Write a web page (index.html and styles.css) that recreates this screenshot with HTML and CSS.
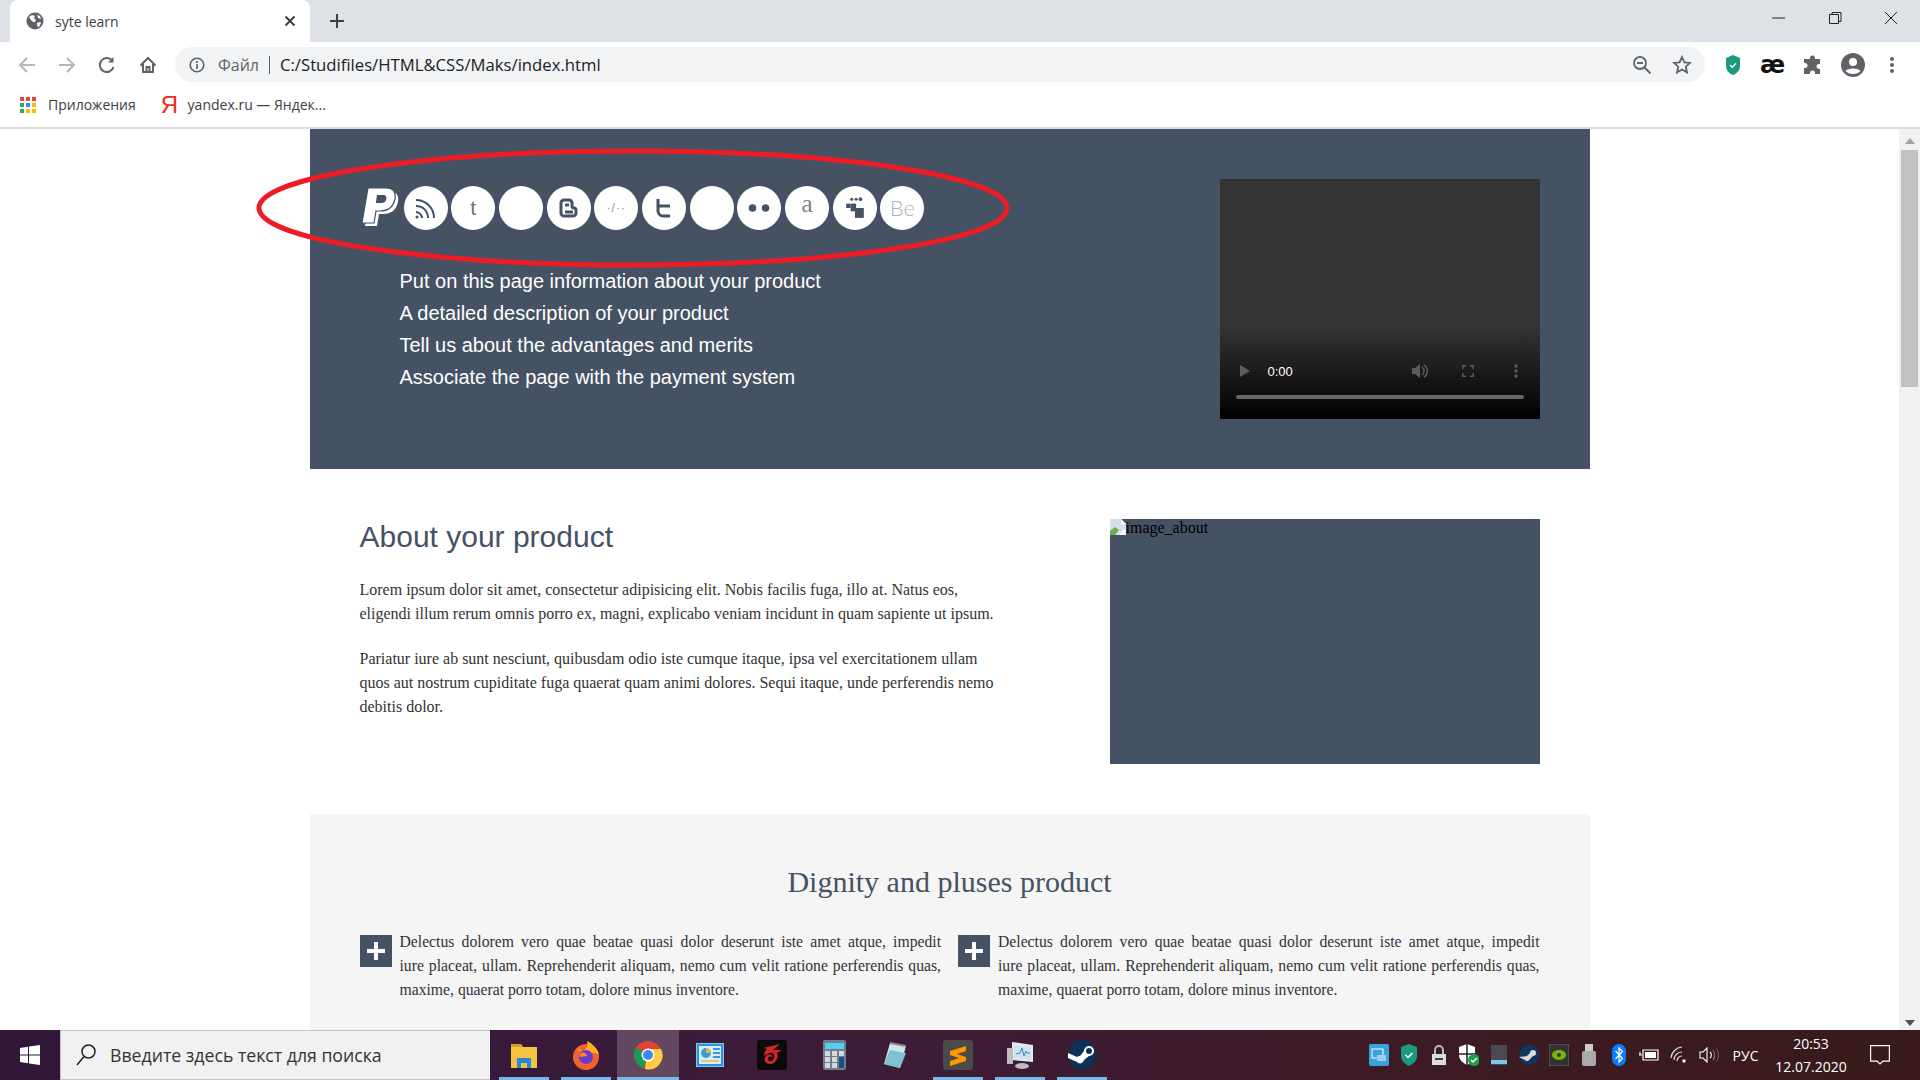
FILE: index.html
```html
<!DOCTYPE html>
<html>
<head>
<meta charset="utf-8">
	<title>syte learn</title>
	<link rel="stylesheet" href="styles.css">
</head>
<body>
	<div class="tabstrip">
		<div class="tab">
			<svg class="globe" width="18" height="18" viewBox="0 0 18 18"><circle cx="9" cy="9" r="8.5" fill="#5f6368"/><path d="M3 5l3-2 3 1-1 2 2 2-1 2H7L5 8zM11 11l3-1 1 1-2 4-2-1zM11 3l3 1 1 3-3-1z" fill="#fff"/></svg>
			<span class="tab-title">syte learn</span>
			<svg class="tab-close" width="12" height="12" viewBox="0 0 12 12"><path d="M1.5 1.5l9 9M10.5 1.5l-9 9" stroke="#3c4043" stroke-width="2"/></svg>
		</div>
		<svg class="new-tab" width="16" height="16" viewBox="0 0 16 16"><path d="M8 1v14M1 8h14" stroke="#3c4043" stroke-width="2"/></svg>
		<div class="win-btns">
			<svg width="16" height="16" viewBox="0 0 16 16"><path d="M1 8h13" stroke="#222" stroke-width="1"/></svg>
			<svg width="16" height="16" viewBox="0 0 16 16" fill="none" stroke="#222"><path d="M2.500 4.500h9v9h-9zM5 4.500V2.500h9v9h-2.500"/></svg>
			<svg width="16" height="16" viewBox="0 0 16 16"><path d="M2 2l12 12M14 2L2 14" stroke="#222" stroke-width="1"/></svg>
		</div>
	</div>

	<div class="toolbar">
		<div class="nav-btns">
			<svg width="18" height="18" viewBox="0 0 18 18" fill="none" stroke="#b4b7bb" stroke-width="2"><path d="M17 9H2M9 2L2 9l7 7"/></svg>
			<svg width="18" height="18" viewBox="0 0 18 18" fill="none" stroke="#b4b7bb" stroke-width="2"><path d="M1 9h15M9 2l7 7-7 7"/></svg>
			<svg width="18" height="18" viewBox="0 0 18 18" fill="none" stroke="#5f6368" stroke-width="2"><path d="M15.500 11a7 7 0 1 1-1-6"/><path d="M15.500 1v5.500H10" fill="#5f6368" stroke="none"/></svg>
			<svg width="18" height="18" viewBox="0 0 18 18" fill="none" stroke="#5f6368" stroke-width="2"><path d="M1.500 9.500L9 2l7.500 7.500M4 8v8h10V8M7.500 16v-5h3v5"/></svg>
		</div>
		<div class="omnibox">
			<svg width="16" height="16" viewBox="0 0 16 16" fill="none" stroke="#5f6368" stroke-width="1.600"><circle cx="8" cy="8" r="6.800"/><path d="M8 7v5M8 4v2"/></svg>
			<span class="scheme">Файл</span>
			<span class="omni-sep"></span>
			<span class="url">C:/Studifiles/HTML&amp;CSS/Maks/index.html</span>
			<svg class="omni-zoom" width="20" height="20" viewBox="0 0 20 20" fill="none" stroke="#5f6368" stroke-width="1.800"><circle cx="8" cy="8" r="6"/><path d="M5 8h6M12.500 12.500l6 6"/></svg>
			<svg class="omni-star" width="20" height="20" viewBox="0 0 20 20" fill="none" stroke="#5f6368" stroke-width="1.800"><path d="M10 2l2.400 5.300 5.600.6-4.200 3.800 1.200 5.700L10 14.500 5 17.400l1.200-5.700L2 7.900l5.600-.6z"/></svg>
		</div>
		<div class="ext-btns">
			<svg width="16" height="22" viewBox="0 0 16 22"><path d="M8 1l7 3v8c0 5-4 8-7 9-3-1-7-4-7-9V4z" fill="#1a9b7f"/><path d="M5 11l2.200 2.200L11 9.500" fill="none" stroke="#fff" stroke-width="1.400"/></svg>
			<span class="ae">æ</span>
			<svg width="20" height="20" viewBox="0 0 20 20"><path d="M7 3a2.500 2.500 0 0 1 5 0v1h5v5h-1a2.500 2.500 0 0 0 0 5h1v5h-5v-1a2.500 2.500 0 0 0-5 0v1H1v-6h1a2.500 2.500 0 0 0 0-5H1V4h6z" fill="#5f6368"/></svg>
			<svg width="24" height="24" viewBox="0 0 24 24"><circle cx="12" cy="12" r="12" fill="#5f6368"/><circle cx="12" cy="9" r="4" fill="#fff"/><path d="M4.500 18c2-3.500 13-3.500 15 0-3.500 4-11.500 4-15 0z" fill="#fff"/></svg>
			<svg width="6" height="18" viewBox="0 0 6 18" fill="#5f6368"><circle cx="3" cy="3" r="2"/><circle cx="3" cy="9" r="2"/><circle cx="3" cy="15" r="2"/></svg>
		</div>
	</div>

	<div class="bookmarks">
		<svg width="16" height="16" viewBox="0 0 16 16">
			<rect x="0" y="0" width="4" height="4" fill="#ea4335"/><rect x="6" y="0" width="4" height="4" fill="#ea4335"/><rect x="12" y="0" width="4" height="4" fill="#ea4335"/>
			<rect x="0" y="6" width="4" height="4" fill="#34a853"/><rect x="6" y="6" width="4" height="4" fill="#4285f4"/><rect x="12" y="6" width="4" height="4" fill="#fbbc05"/>
			<rect x="0" y="12" width="4" height="4" fill="#34a853"/><rect x="6" y="12" width="4" height="4" fill="#fbbc05"/><rect x="12" y="12" width="4" height="4" fill="#fbbc05"/>
		</svg>
		<span class="bm-text">Приложения</span>
		<span class="ya">Я</span>
		<span class="bm-text">yandex.ru — Яндек...</span>
	</div>

	<div class="viewport">
		<div class="page">
			<div class="hero">
				<div class="hero-left">
					<div class="socials">
						<svg class="paypal" width="42" height="42" viewBox="0 0 42 42"><path d="M8 1H26C34 1 36 6 35 12C33 21 27 24 20 24H16L14 36H2Z" fill="#fff" transform="translate(3 3)"/><path d="M8 1H26C34 1 36 6 35 12C33 21 27 24 20 24H16L14 36H2Z" fill="#fff" stroke="#455264" stroke-width="1.200"/><path d="M17 8H23C26 8 27 10 26 13C25 16 22 16 20 16H15.800Z" fill="#455264"/></svg>
						<span class="soc"><svg width="28" height="28" viewBox="0 0 28 28" fill="none" stroke="#455264" stroke-width="2"><path d="M4 6c10 0 18 8 18 18M4 12c7 0 12 5 12 12M4 18c3 0 6 3 6 6"/><circle cx="5" cy="23" r="1.500" fill="#455264" stroke="none"/></svg></span>
						<span class="soc soc-t">t</span>
						<span class="soc"></span>
						<span class="soc"><svg width="22" height="22" viewBox="0 0 22 22" fill="none" stroke="#455264" stroke-width="3"><path d="M3 6a3 3 0 0 1 3-3h5a3 3 0 0 1 3 3v3a2 2 0 0 0 2 2 2 2 0 0 1 2 2v3a3 3 0 0 1-3 3H6a3 3 0 0 1-3-3zM7 8h4M7 15h8" /></svg></span>
						<span class="soc soc-code">·/··</span>
						<span class="soc"><svg width="22" height="22" viewBox="0 0 22 22" fill="none" stroke="#455264" stroke-width="3"><path d="M5 2v12a5 5 0 0 0 5 5h7M5 9h12"/></svg></span>
						<span class="soc"></span>
						<span class="soc"><svg width="24" height="10" viewBox="0 0 24 10" fill="#455264"><circle cx="5.500" cy="5" r="3.800"/><circle cx="18.500" cy="5" r="3.800"/></svg></span>
						<span class="soc soc-a">a</span>
						<span class="soc"><svg width="22" height="22" viewBox="0 0 20 20" fill="#455264"><circle cx="7" cy="2" r="1.400"/><circle cx="11" cy="2" r="1.400"/><circle cx="15" cy="2" r="1.700"/><rect x="2" y="6" width="4" height="4"/><rect x="6" y="6" width="5" height="7"/><rect x="10" y="10" width="8" height="9"/></svg></span>
						<span class="soc soc-be">Be</span>
					</div>
					<ul class="hero-list">
						<li>Put on this page information about your product</li>
						<li>A detailed description of your product</li>
						<li>Tell us about the advantages and merits</li>
						<li>Associate the page with the payment system</li>
					</ul>
				</div>
				<div class="video">
					<div class="controls">
						<div class="controls-row">
							<svg width="10" height="12" viewBox="0 0 10 12"><path d="M0 0l10 6-10 6z" fill="#5c5c5c"/></svg>
							<span class="time">0:00</span>
							<svg class="vol" width="16" height="16" viewBox="0 0 16 16" fill="none" stroke="#5c5c5c" stroke-width="1.500"><path d="M0 5h3l5-4v14l-5-4H0z" fill="#5c5c5c" stroke="none"/><path d="M10 4a5 5 0 0 1 0 8M12 2a7 7 0 0 1 0 12"/></svg>
							<svg class="full" width="12" height="12" viewBox="0 0 12 12" fill="none" stroke="#5c5c5c" stroke-width="1.500"><path d="M.8 4V.8H4M8 .8h3.200V4M11.200 8v3.200H8M4 11.200H.8V8"/></svg>
							<svg class="more" width="4" height="14" viewBox="0 0 4 14" fill="#5c5c5c"><circle cx="2" cy="2" r="1.700"/><circle cx="2" cy="7" r="1.700"/><circle cx="2" cy="12" r="1.700"/></svg>
						</div>
						<div class="progress"></div>
					</div>
				</div>
			</div>

			<div class="about">
				<div class="about-text">
					<h2>About your product</h2>
					<p>Lorem ipsum dolor sit amet, consectetur adipisicing elit. Nobis facilis fuga, illo at. Natus eos, eligendi illum rerum omnis porro ex, magni, explicabo veniam incidunt in quam sapiente ut ipsum.</p>
					<p>Pariatur iure ab sunt nesciunt, quibusdam odio iste cumque itaque, ipsa vel exercitationem ullam quos aut nostrum cupiditate fuga quaerat quam animi dolores. Sequi itaque, unde perferendis nemo debitis dolor.</p>
				</div>
				<div class="about-img">
					<svg width="16" height="16" viewBox="0 0 16 16"><path d="M0 0h11l5 5v11H0z" fill="#d5dfeb"/><path d="M11 0l5 5h-5z" fill="#fff"/><path d="M0 16v-4l5-4 4 3-4 5z" fill="#6fae4e"/><path d="M9 16l5-6 2 2v4z" fill="#fff"/></svg>
					<span>image_about</span>
				</div>
			</div>

			<div class="pluses">
				<h3>Dignity and pluses product</h3>
				<div class="pluses-grid">
					<div class="plus-item">
						<span class="plus-box"><svg width="20" height="20" viewBox="0 0 20 20"><path d="M10 1v18M1 10h18" stroke="#fff" stroke-width="4"/></svg></span>
						<p><span class="ln">Delectus dolorem vero quae beatae quasi dolor deserunt iste amet atque, impedit</span> <span class="ln">iure placeat, ullam. Reprehenderit aliquam, nemo cum velit ratione perferendis quas,</span> maxime, quaerat porro totam, dolore minus inventore.</p>
					</div>
					<div class="plus-item">
						<span class="plus-box"><svg width="20" height="20" viewBox="0 0 20 20"><path d="M10 1v18M1 10h18" stroke="#fff" stroke-width="4"/></svg></span>
						<p><span class="ln">Delectus dolorem vero quae beatae quasi dolor deserunt iste amet atque, impedit</span> <span class="ln">iure placeat, ullam. Reprehenderit aliquam, nemo cum velit ratione perferendis quas,</span> maxime, quaerat porro totam, dolore minus inventore.</p>
					</div>
				</div>
			</div>

			<svg class="red-oval" width="760" height="124" viewBox="0 0 760 124"><ellipse cx="380" cy="60" rx="374" ry="57" fill="none" stroke="#ed1c24" stroke-width="5"/></svg>
		</div>
		<div class="scrollbar">
			<svg width="10" height="6" viewBox="0 0 10 6"><path d="M5 0l5 6H0z" fill="#a3a3a3"/></svg>
			<div class="thumb"></div>
			<svg class="arrow-down" width="10" height="6" viewBox="0 0 10 6"><path d="M5 6l5-6H0z" fill="#505050"/></svg>
		</div>
	</div>

	<div class="taskbar">
		<div class="start"><svg width="20" height="20" viewBox="0 0 20 20" fill="#fff"><path d="M0 3l8-1.200V9.500H0zM9 1.600L20 0v9.500H9zM0 10.500h8v7.700L0 17zM9 10.500h11V20L9 18.400z"/></svg></div>
		<div class="search">
			<svg width="20" height="22" viewBox="0 0 20 22" fill="none" stroke="#222" stroke-width="1.500"><circle cx="12.500" cy="7.500" r="6.500"/><path d="M8 12.500L1 21"/></svg>
			<span>Введите здесь текст для поиска</span>
		</div>
		<div class="apps">
			<div class="app open"><svg width="28" height="28" viewBox="0 0 28 28"><path d="M1 3h10l2 3h14v21H1z" fill="#f5c242"/><path d="M1 3h10l2 3H1z" fill="#d69b1f"/><path d="M7 27V17h14v10h-4v-5h-6v5z" fill="#2b88d8"/></svg></div>
			<div class="app open"><svg width="30" height="30" viewBox="0 0 30 30"><circle cx="15" cy="17" r="13" fill="#f2622e"/><path d="M6 8c2 3 3 4 7 3 3-3 4-6 3-10 6 3 11 8 12 14-3-3-8-3-10 0z" fill="#ffb01f"/><circle cx="15" cy="17" r="7" fill="#6a3bc9"/><path d="M9 14c3-3 6-1 7 2l-7 1z" fill="#f98a2c"/></svg></div>
			<div class="app open active"><svg width="30" height="30" viewBox="0 0 30 30"><circle cx="15" cy="15" r="14" fill="#db4437"/><path d="M15 15L3 8a14 14 0 0 0 7 20z" fill="#0f9d58"/><path d="M15 9h13a14 14 0 0 1-16 20z" fill="#ffcd40"/><circle cx="15" cy="15" r="6.500" fill="#fff"/><circle cx="15" cy="15" r="5" fill="#4285f4"/></svg></div>
			<div class="app"><svg width="28" height="24" viewBox="0 0 28 24"><rect x=".5" y=".5" width="27" height="23" fill="#2a94e0" stroke="#7cc7f5"/><rect x="3" y="3" width="22" height="18" fill="#d8eefb"/><circle cx="10" cy="10" r="5" fill="#3a9ad9"/><path d="M10 5a5 5 0 0 1 5 5h-5z" fill="#f3b33d"/><path d="M17 6h7M17 10h7M17 14h7" stroke="#3a9ad9" stroke-width="2"/><path d="M5 18h18" stroke="#f3b33d" stroke-width="1.500"/></svg></div>
			<div class="app"><svg width="30" height="30" viewBox="0 0 30 30"><rect width="30" height="30" rx="3" fill="#0b0b0b"/><path d="M6 8l17-4-7 6h9l-5 3c2 4-1 11-7 11-5 0-7-5-4-8 2-2 6-2 7 1-2-1-5-1-5 2s5 3 6-1c1-3-1-6-4-5-2 0-4 2-6 3 0-3 1-5 3-7z" fill="#d8232a"/></svg></div>
			<div class="app"><svg width="23" height="30" viewBox="0 0 23 30"><rect width="23" height="30" rx="2" fill="#6e7f8d"/><rect x="2" y="3" width="19" height="6" fill="#53cdf1"/><g fill="#d5d9dc"><rect x="2" y="11" width="5" height="5"/><rect x="9" y="11" width="5" height="5"/><rect x="16" y="11" width="5" height="5"/><rect x="2" y="17" width="5" height="5"/><rect x="9" y="17" width="5" height="5"/><rect x="2" y="23" width="5" height="5"/><rect x="9" y="23" width="5" height="5"/></g><rect x="16" y="17" width="5" height="11" fill="#1c4f8d"/></svg></div>
			<div class="app"><svg width="28" height="28" viewBox="0 0 28 28"><path d="M8 2l16 3-6 22L2 23z" fill="#cfe6ee"/><path d="M2 23L8 9l16 3-6 15z" fill="#7fc3d3"/><path d="M8 2l16 3" stroke="#888" stroke-width="2"/></svg></div>
			<div class="app open"><svg width="30" height="30" viewBox="0 0 30 30"><rect width="30" height="30" rx="3" fill="#4a4a4a"/><path d="M7 11L23 6V11L14 14L23 17V21L7 26V21L16 18L7 15Z" fill="#ff9800"/></svg></div>
			<div class="app open"><svg width="28" height="30" viewBox="0 0 28 30"><path d="M6 2l21 3v17l-21-2z" fill="#e8e8e8"/><path d="M8 5l17 2v13L8 18z" fill="#cfe3f2"/><path d="M10 14l4-1 2-5 2 8 2-5 1 2h3" fill="none" stroke="#3d85c6"/><rect x="1" y="8" width="6" height="16" fill="#bdbdbd"/><ellipse cx="16" cy="26" rx="7" ry="3" fill="#bdbdbd"/></svg></div>
			<div class="app open"><svg width="28" height="30" viewBox="0 0 28 30"><ellipse cx="14" cy="15" rx="14" ry="15" fill="#0e3158"/><path d="M0 18l9 4a4 4 0 0 0 7-2l5-4a5 5 0 1 0-5-5l-4 5a4 4 0 0 0-3 1L0 13z" fill="#fff"/><circle cx="21" cy="11" r="3" fill="#0e3158"/></svg></div>
		</div>
		<div class="tray">
			<span class="ti"><svg width="20" height="22" viewBox="0 0 20 22"><rect width="20" height="22" rx="2" fill="#3ba2e0"/><rect x="3" y="5" width="11" height="9" fill="none" stroke="#fff"/><rect x="8" y="11" width="9" height="6" fill="#9ad0f0"/></svg></span>
			<span class="ti"><svg width="16" height="22" viewBox="0 0 16 22"><path d="M8 0l8 3v9c0 5-4 8-8 10-4-2-8-5-8-10V3z" fill="#1a9b7f"/><path d="M4.500 11l2.500 2.500L11.500 9" fill="none" stroke="#fff" stroke-width="1.500"/></svg></span>
			<span class="ti"><svg width="16" height="22" viewBox="0 0 16 22"><path d="M4 10V6a4 4 0 0 1 8 0v4" fill="none" stroke="#bbb" stroke-width="2"/><rect x="1" y="10" width="14" height="11" fill="#ddd"/><rect x="4" y="14" width="8" height="2" fill="#444"/></svg></span>
			<span class="ti"><svg width="20" height="22" viewBox="0 0 20 22"><path d="M8 0l8 3v8c0 5-4 8-8 10-4-2-8-5-8-10V3z" fill="#fff"/><path d="M8 0v21M0 10h16" stroke="#222" stroke-width="1.500"/><circle cx="15" cy="16" r="6" fill="#16a34a"/><path d="M12 16l2 2 4-4" fill="none" stroke="#fff" stroke-width="1.500"/></svg></span>
			<span class="ti"><svg width="16" height="20" viewBox="0 0 16 20"><rect width="16" height="20" fill="#4a4a52"/><rect y="15" width="16" height="4" fill="#7cc6ee"/></svg></span>
			<span class="ti"><svg width="20" height="20" viewBox="0 0 20 20"><circle cx="10" cy="10" r="10" fill="#12365e"/><path d="M0 12l6 3a3 3 0 0 0 5-1l3-3a3 3 0 1 0-3-3l-3 3z" fill="#ddd"/></svg></span>
			<span class="ti"><svg width="20" height="22" viewBox="0 0 20 22"><rect width="20" height="22" rx="2" fill="#333" stroke="#666"/><ellipse cx="10" cy="11" rx="7" ry="5" fill="#76b900"/><circle cx="10" cy="11" r="2" fill="#333"/></svg></span>
			<span class="ti"><svg width="16" height="22" viewBox="0 0 16 22"><rect x="4" y="0" width="8" height="7" fill="#ccc"/><rect x="1" y="7" width="14" height="15" rx="2" fill="#aaa"/></svg></span>
			<span class="ti"><svg width="14" height="22" viewBox="0 0 14 22"><rect width="14" height="22" rx="7" fill="#0a7cff"/><path d="M3.500 7l7 7.500L7 18V4l3.500 3.500-7 7.500" fill="none" stroke="#fff" stroke-width="1.200"/></svg></span>
			<span class="ti"><svg width="20" height="14" viewBox="0 0 20 14" fill="none" stroke="#fff" stroke-width="1.200"><path d="M4 2h15v10H4z"/><path d="M6 4h11v6H6z" fill="#fff" stroke="none"/><path d="M0 7h3M1 4v3"/></svg></span>
			<span class="ti"><svg width="18" height="18" viewBox="0 0 18 18" fill="none" stroke="#ddd" stroke-width="1.200"><path d="M1 12a12 12 0 0 1 11-11M4 14a8 8 0 0 1 8-8M7 15a5 5 0 0 1 5-5"/><circle cx="14" cy="15" r="1.700" fill="#fff" stroke="none"/></svg></span>
			<span class="ti"><svg width="20" height="16" viewBox="0 0 20 16" fill="none" stroke="#fff" stroke-width="1.100"><path d="M1 5h3l4-4v14l-4-4H1z"/><path d="M11 5a4 4 0 0 1 0 6"/><path d="M14 3a8 8 0 0 1 0 10" stroke="#888"/><path d="M17 1a11 11 0 0 1 0 14" stroke="#6a5050"/></svg></span>
			<span class="lang">РУС</span>
			<div class="clock"><span>20:53</span><span>12.07.2020</span></div>
			<svg class="notif" width="20" height="20" viewBox="0 0 20 20" fill="none" stroke="#fff" stroke-width="1.200"><path d="M.6.600h18.800v15.500h-6.500L10 19l-2.900-2.900H.6z"/></svg>
		</div>
	</div>
</body>
</html>
```
FILE: styles.css
```css
*{
	margin: 0;
	padding: 0;
	box-sizing: border-box;
}
html,body{
	width: 100%;
	height: 100%;
	overflow: hidden;
}
body{
	display: flex;
	flex-direction: column;
	font-family: "Open Sans", "Noto Sans", sans-serif;
	background: #fff;
}

/* browser top */
.tabstrip{
	height: 42px;
	background: #dee1e6;
	display: flex;
	align-items: center;
}
.tab{
	width: 300px;
	height: 42px;
	margin-left: 10px;
	background: #fff;
	border-radius: 8px 8px 0 0;
	display: flex;
	align-items: center;
	padding: 0 14px 0 16px;
}
.tab-title{
	margin-left: 11px;
	font-size: 14px;
	color: #3c4043;
	flex: 1;
}
.new-tab{
	margin-left: 19px;
}
.win-btns{
	margin-left: auto;
	display: flex;
	align-items: center;
	gap: 40px;
	padding-right: 21px;
	margin-top: -6px;
}
.toolbar{
	height: 46px;
	display: flex;
	align-items: center;
	padding-top: 0;
}
.nav-btns{
	width: 175px;
	padding-left: 18px;
	display: flex;
	align-items: center;
	gap: 22.200px;
}
.omnibox{
	width: 1530px;
	height: 35px;
	margin-top: -1px;
	background: #f1f3f4;
	border-radius: 18px;
	display: flex;
	align-items: center;
	padding-left: 14px;
}
.scheme{
	margin-left: 13px;
	font-size: 16px;
	color: #5f6368;
}
.omni-sep{
	width: 1px;
	height: 18px;
	background: #5f6368;
	margin: 0 10px 0 10px;
}
.url{
	font-size: 16.700px;
	color: #202124;
	flex: 1;
}
.omni-zoom{
	margin-right: 20px;
}
.omni-star{
	margin-right: 13px;
}
.ext-btns{
	flex: 1;
	display: flex;
	align-items: center;
	padding-left: 20px;
}
.ext-btns svg:nth-child(3){
	margin-left: 18px;
}
.ext-btns svg:nth-child(4){
	margin-left: 18px;
}
.ext-btns svg:nth-child(5){
	margin-left: 24px;
}
.ae{
	margin-left: 19px;
	font-family: "DejaVu Sans", sans-serif;
	font-size: 24px;
	line-height: 20px;
	font-weight: bold;
	color: #111;
}
.bookmarks{
	height: 41px;
	padding: 0 0 6px 20px;
	border-bottom: 2px solid #dcdde1;
	display: flex;
	align-items: center;
}
.bm-text{
	margin-left: 12px;
	font-size: 14px;
	color: #3c4043;
}
.ya{
	margin-left: 25px;
	font-family: "Liberation Sans", sans-serif;
	font-size: 24px;
	color: #f02d1e;
}
.ya + .bm-text{
	margin-left: 9.500px;
}

/* page */
.viewport{
	flex: 1;
	min-height: 0;
	display: flex;
}
.page{
	flex: 1;
	position: relative;
	overflow: hidden;
}
.hero,.about,.pluses{
	width: 1280px;
	margin: 0 auto;
}
.hero{
	height: 340px;
	padding: 50px;
	background: #455264;
	display: flex;
	justify-content: space-between;
}
.socials{
	display: flex;
	align-items: center;
	height: 58px;
}
.paypal{
	margin-right: 2px;
}
.soc{
	width: 44px;
	height: 44px;
	margin-right: 3.700px;
	border-radius: 50%;
	background: #fff;
	display: flex;
	align-items: center;
	justify-content: center;
	flex-shrink: 0;
}
.soc-t{
	font-family: "Liberation Sans", sans-serif;
	font-size: 21px;
	color: #6b7583;
}
.soc-code{
	font-family: "Liberation Sans", sans-serif;
	font-size: 12px;
	letter-spacing: 1px;
	color: #8a93a0;
}
.soc-a{
	font-family: "Liberation Serif", serif;
	font-size: 26px;
	color: #7d8591;
	padding-bottom: 8px;
}
.soc-be{
	font-family: "Lato", sans-serif;
	font-size: 22px;
	font-weight: 300;
	color: #aeb3bb;
	padding-bottom: 2px;
}
.hero-list{
	list-style: none;
	margin-top: 28px;
	padding-left: 40px;
	font-family: "Liberation Sans", sans-serif;
	font-size: 20px;
	line-height: 32px;
	color: #fff;
}
.video{
	width: 320px;
	height: 240px;
	background: linear-gradient(#333 0, #333 62%, #000 100%);
	display: flex;
	align-items: flex-end;
}
.controls{
	width: 100%;
	padding: 0 16px 20px;
}
.controls-row{
	display: flex;
	align-items: center;
	padding-left: 4px;
	height: 24px;
	margin-bottom: 12px;
}
.time{
	margin-left: 18px;
	font-family: "Liberation Sans", sans-serif;
	font-size: 13px;
	color: #fff;
}
.vol{
	margin-left: auto;
}
.full{
	margin-left: 34px;
}
.more{
	margin-left: 40px;
	margin-right: 6px;
}
.progress{
	height: 4px;
	border-radius: 2px;
	background: #666;
}
.about{
	height: 345px;
	padding: 50px;
	display: flex;
	justify-content: space-between;
	align-items: flex-start;
}
.about-text{
	width: 640px;
	font-family: "Liberation Serif", serif;
	font-size: 16px;
	line-height: 24px;
	color: #333;
}
.about-text h2{
	font-family: "Liberation Sans", sans-serif;
	font-size: 30px;
	font-weight: normal;
	line-height: 36px;
	color: #455264;
	margin-bottom: 23px;
}
.about-text p{
	margin-bottom: 21px;
}
.about-img{
	width: 430px;
	height: 245px;
	background: #455264;
	font-family: "Liberation Serif", serif;
	font-size: 16px;
	line-height: 18px;
	color: #000;
	display: flex;
	align-items: flex-start;
}
.pluses{
	height: 400px;
	padding: 50px;
	background: #f5f5f5;
}
.pluses h3{
	font-family: "Liberation Serif", serif;
	font-size: 30px;
	font-weight: normal;
	line-height: 36px;
	color: #455264;
	text-align: center;
	margin-bottom: 30px;
}
.pluses-grid{
	display: grid;
	grid-template-columns: 1fr 1fr;
	column-gap: 17px;
}
.plus-item{
	display: flex;
	gap: 8px;
	font-family: "Liberation Serif", serif;
	font-size: 15.700px;
	line-height: 24px;
	color: #333;
	text-align: justify;
}
.plus-item p{
	flex: 1;
}
.ln{
	display: block;
	text-align-last: justify;
}
.plus-box{
	width: 32px;
	height: 32px;
	margin-top: 5px;
	flex-shrink: 0;
	background: #455264;
	display: flex;
	align-items: center;
	justify-content: center;
}
.red-oval{
	position: absolute;
	left: 253px;
	top: 19px;
}
.scrollbar{
	width: 21px;
	background: #f1f1f1;
	display: flex;
	flex-direction: column;
	align-items: center;
	padding-top: 9px;
}
.thumb{
	width: 17px;
	height: 237px;
	margin-top: 6px;
	background: #c1c1c1;
}
.arrow-down{
	margin-top: auto;
	margin-bottom: 4px;
}

/* windows taskbar */
.taskbar{
	height: 50px;
	background: linear-gradient(90deg, #311638 0, #3d1c38 45%, #3c1b24 75%, #391a1a 100%);
	display: flex;
	align-items: center;
}
.start{
	width: 60px;
	height: 50px;
	display: flex;
	align-items: center;
	justify-content: center;
}
.search{
	width: 430px;
	height: 50px;
	background: #f1f1f1;
	border: 1px solid #c4c4c4;
	border-right: 0;
	display: flex;
	align-items: center;
	padding-left: 15px;
	font-size: 17.700px;
	color: #333;
}
.search span{
	margin-left: 14px;
}
.apps{
	display: flex;
	margin-left: 3px;
}
.app{
	width: 62px;
	height: 50px;
	display: flex;
	align-items: center;
	justify-content: center;
	position: relative;
}
.app.open:after{
	content: "";
	position: absolute;
	left: 6px;
	right: 6px;
	bottom: 0;
	height: 3px;
	background: #76b9ed;
}
.app.active{
	background: rgba(255,255,255,0.2);
}
.app.active:after{
	left: 0;
	right: 0;
}
.tray{
	margin-left: auto;
	display: flex;
	align-items: center;
	padding-right: 30px;
	color: #fff;
}
.ti{
	width: 30px;
	display: flex;
	align-items: center;
	justify-content: center;
}
.lang{
	margin-left: 9px;
	font-size: 14px;
}
.clock{
	width: 100px;
	margin-left: 2.500px;
	display: flex;
	flex-direction: column;
	align-items: center;
	font-size: 14px;
	line-height: 23px;
}
.notif{
	margin-left: 9px;
}
```
